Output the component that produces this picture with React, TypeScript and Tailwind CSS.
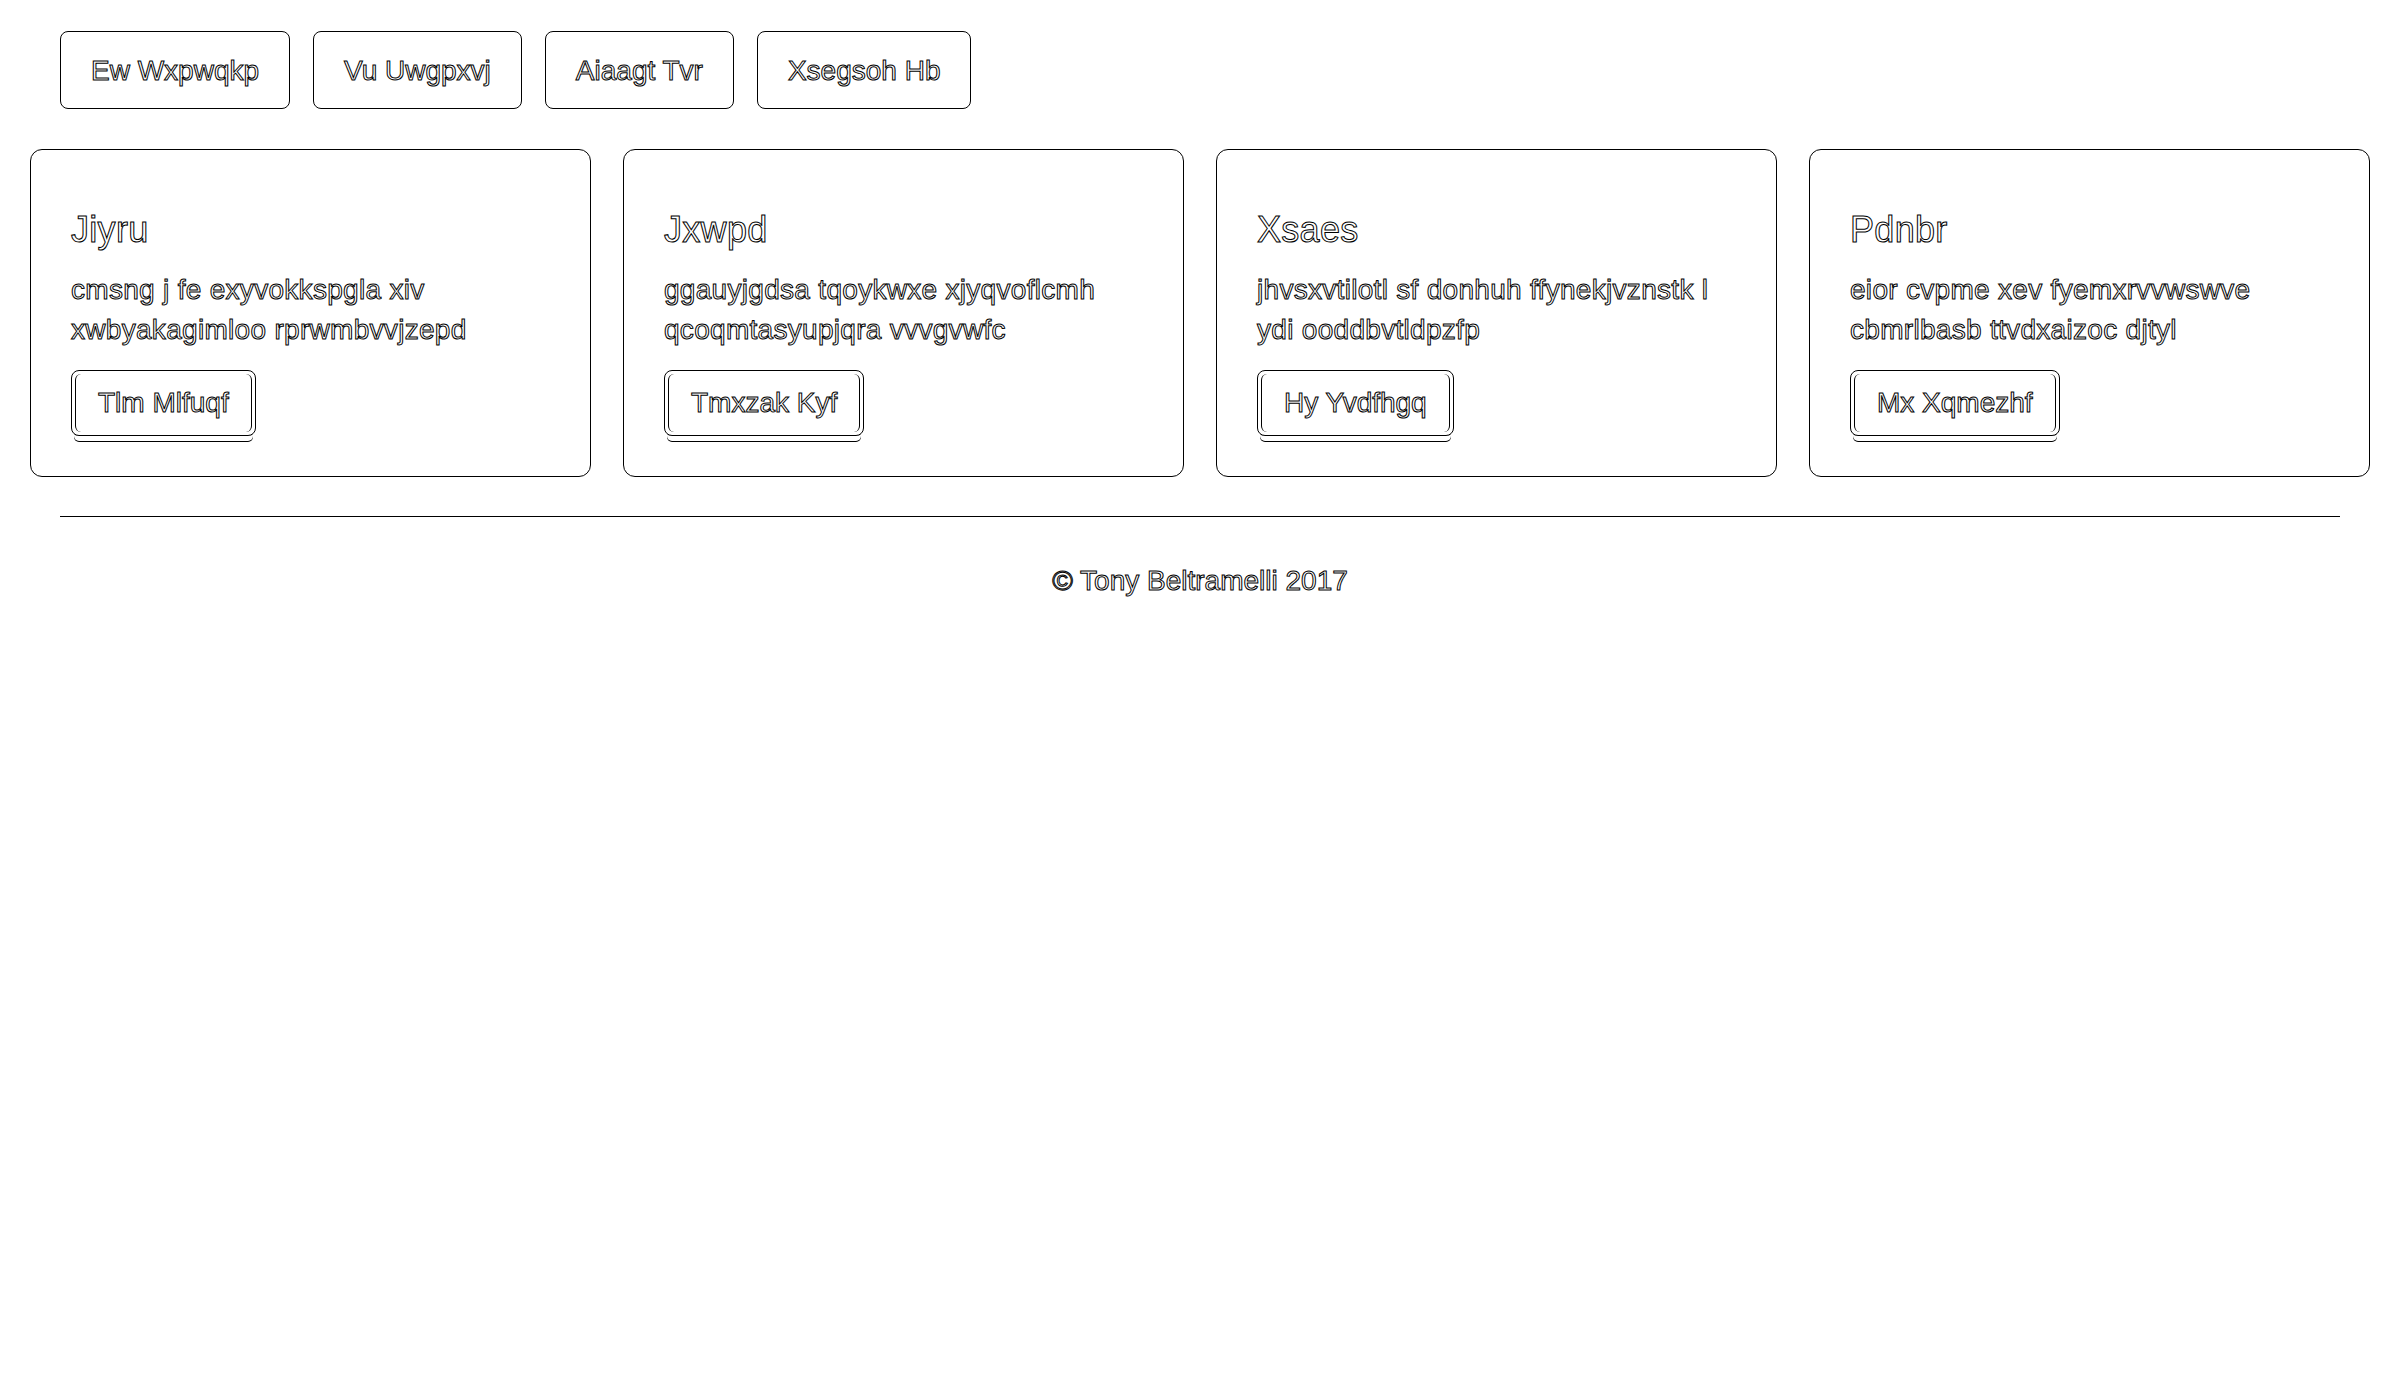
import React from 'react'

const NAV_ITEMS = ['Ew Wxpwqkp', 'Vu Uwgpxvj', 'Aiaagt Tvr', 'Xsegsoh Hb']

const CARDS = [
  { title: 'Jiyru', text: 'cmsng j fe exyvokkspgla xiv xwbyakagimloo rprwmbvvjzepd', button: 'Tlm Mlfuqf' },
  { title: 'Jxwpd', text: 'ggauyjgdsa tqoykwxe xjyqvoflcmh qcoqmtasyupjqra vvvgvwfc', button: 'Tmxzak Kyf' },
  { title: 'Xsaes', text: 'jhvsxvtilotl sf donhuh ffynekjvznstk l ydi ooddbvtldpzfp', button: 'Hy Yvdfhgq' },
  { title: 'Pdnbr', text: 'eior cvpme xev fyemxrvvwswve cbmrlbasb ttvdxaizoc djtyl', button: 'Mx Xqmezhf' },
]

// outlined glyphs, like the reference
const outline = 'text-white [-webkit-text-stroke:1px_#000]'

function Card({ title, text, button }: { title: string; text: string; button: string }) {
  return (
    <div className="rounded-[12px] border border-black px-[40px] pt-[40px] pb-[40px]">
      <h4 className={`mt-[20px] mb-[20px] text-[36px] leading-[39.6px] tracking-[0.3px] ${outline}`}>{title}</h4>
      <p className={`mb-[20px] text-[28px] leading-[40px] tracking-[0.3px] ${outline}`}>{text}</p>
      <a
        href="#"
        className={`relative inline-block rounded-[8px] border border-black px-[26px] py-[12px] text-[28px] leading-[40px] shadow-[0_8px_0_-3px_#fff,0_9px_0_-3px_#000] after:absolute after:inset-[3px] after:rounded-[6px] after:border-x after:border-black after:content-[''] ${outline}`}
      >
        {button}
      </a>
    </div>
  )
}

function App() {
  return (
    <div className="min-h-screen bg-white font-['Liberation_Sans',Arial,sans-serif]">
      <div className="mx-auto w-[2340px]">
        {/* Header pills */}
        <nav className="flex gap-[23px] px-[30px] pt-[31px]">
          {NAV_ITEMS.map(item => (
            <a
              key={item}
              href="#"
              className={`rounded-[8px] border border-black px-[30px] pt-[19px] pb-[17px] text-[28px] leading-[40px] ${outline}`}
            >
              {item}
            </a>
          ))}
        </nav>

        {/* Cards row */}
        <div className="mt-[40px] grid grid-cols-4 gap-[32px]">
          {CARDS.map(c => (
            <Card key={c.title} {...c} />
          ))}
        </div>

        {/* Footer */}
        <div className="mx-[30px] mt-[39px] h-px bg-black" />
        <footer className="mt-[44px] text-center">
          <p className={`text-[28px] leading-[40px] ${outline}`}>© Tony Beltramelli 2017</p>
        </footer>
      </div>
    </div>
  )
}

export default App
